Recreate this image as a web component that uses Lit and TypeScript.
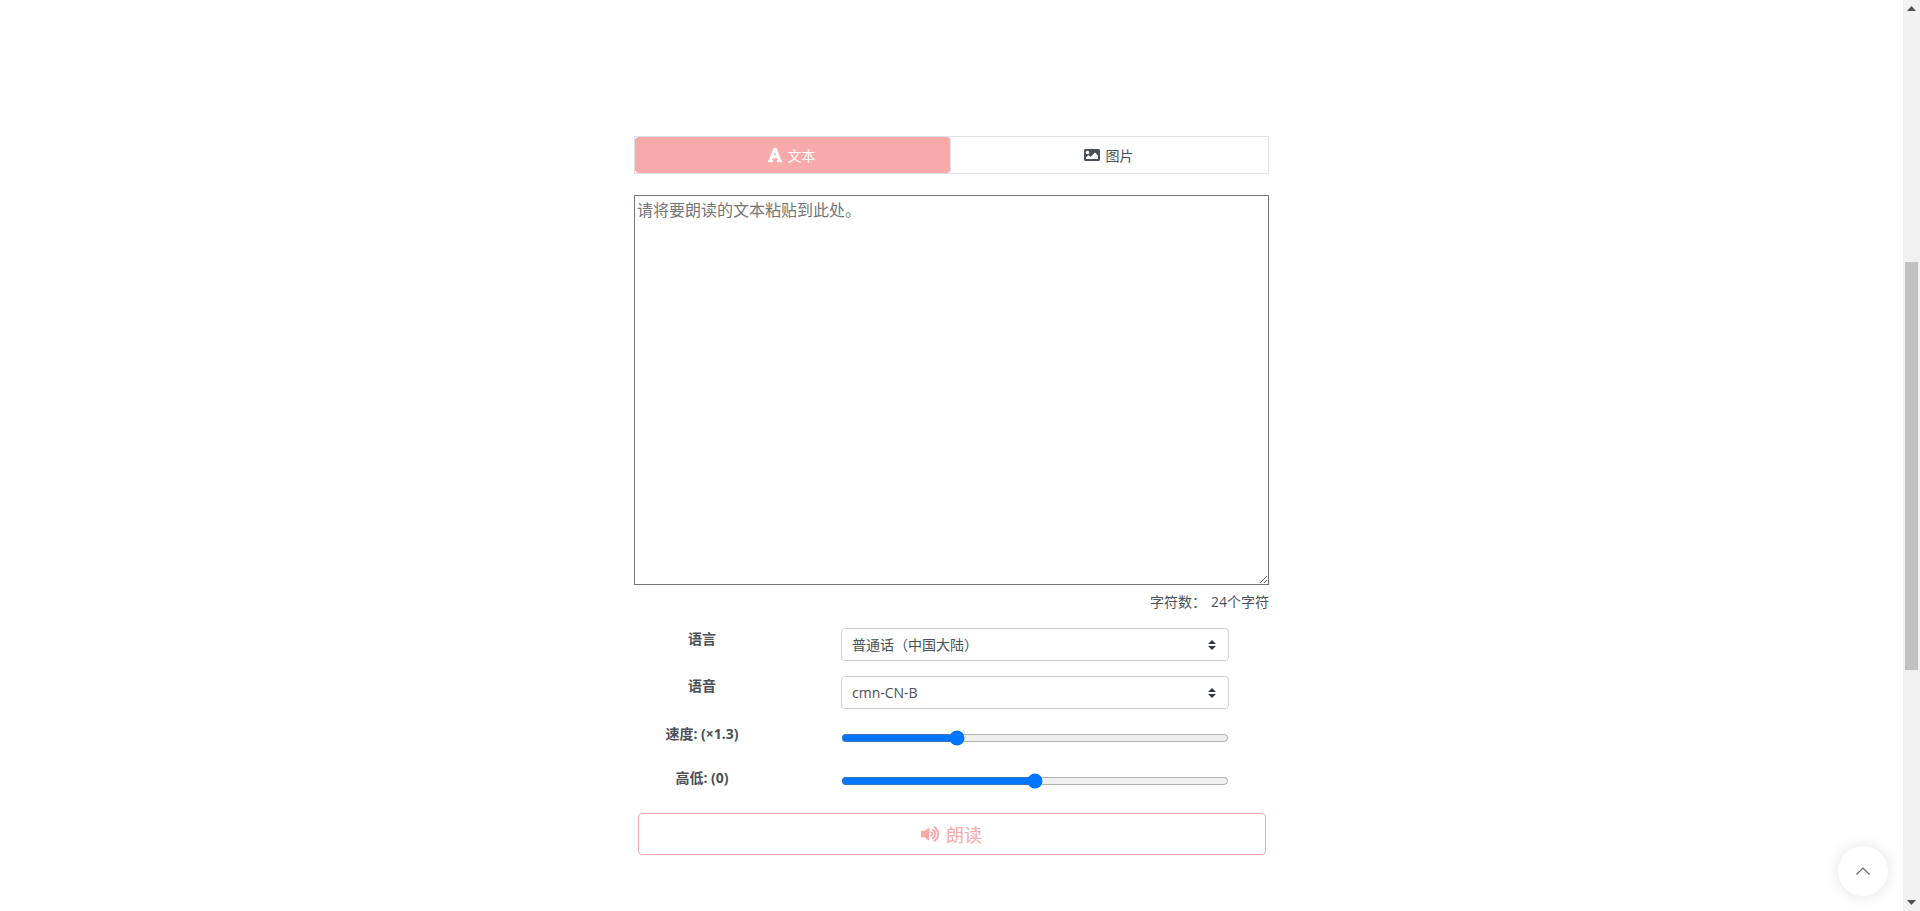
import { LitElement, html, css } from "lit";
import { customElement } from "lit/decorators.js";

@customElement("app-root")
export class AppRoot extends LitElement {
  static styles = css`
    :host {
      display: flex;
      height: 911px;
      overflow: hidden;
      background: #fff;
      color: #495057;
      font-family: "Open Sans", "Noto Sans CJK SC", sans-serif;
      font-size: 14px;
      line-height: 21px;
    }
    .main { flex: 1; display: flex; justify-content: center; padding-top: 136px; }
    .col { width: 635px; display: flex; flex-direction: column; }
    .tabs { display: flex; height: 38px; border: 1px solid #dee2e6; box-sizing: border-box; }
    .tab { flex: 1; display: flex; align-items: center; justify-content: center; gap: 6px; color: #495057; padding-right: 2px; }
    .tab.on { flex: none; box-sizing: border-box; width: 316px; background: #f8a9a9; color: #fff; border-radius: 4px; border-right: 1px solid #dee2e6; }
    .tab svg { height: 16px; fill: currentColor; display: block; }
    .tab.on svg { stroke: currentColor; stroke-width: 14; }
    textarea {
      display: block;
      box-sizing: border-box;
      width: 635px;
      height: 390px;
      margin: 21px 0 0;
      padding: 4px 2px 2px;
      font: 16px/21px "Open Sans", "Noto Sans CJK SC", sans-serif;
      border: 1px solid #767676;
      border-radius: 0;
      outline: none;
      background: #fff;
    }
    .count { display: flex; justify-content: flex-end; gap: 5px; height: 21px; margin-top: 6px; font-size: 14px; }
    .rows { display: flex; flex-direction: column; margin-top: 16px; }
    .row { display: grid; grid-template-columns: 136px 388px; column-gap: 71px; align-items: start; }
    .lab { font-weight: 700; text-align: center; }
    .row.voice .lab { margin-top: -1px; }
    select {
      appearance: none;
      -webkit-appearance: none;
      box-sizing: border-box;
      width: 388px;
      height: 33px;
      padding: 0 28px 0 10px;
      border: 1px solid #ced4da;
      border-radius: 4px;
      color: #495057;
      font: 14px "Open Sans", "Noto Sans CJK SC", sans-serif;
      background: #fff url("data:image/svg+xml,%3csvg xmlns='http://www.w3.org/2000/svg' width='4' height='5' viewBox='0 0 4 5'%3e%3cpath fill='%23343a40' d='M2 0L0 2h4zm0 5L0 3h4z'/%3e%3c/svg%3e") right 12px center/8px 10px no-repeat;
      outline: none;
    }
    .row.sel { height: 48px; }
    .row.rng { height: 43px; }
    .row.speed .lab { margin-top: -1px; }
    input[type="range"] { display: block; width: 388px; margin: 6px 0 0; }
    .read {
      box-sizing: border-box;
      align-self: center;
      width: 628px;
      height: 42px;
      margin-top: 3px;
      display: flex;
      align-items: center;
      justify-content: center;
      gap: 7px;
      border: 1px solid #f8a9a9;
      border-radius: 4px;
      background: #fff;
      color: #f8a9a9;
      font: 18px "Open Sans", "Noto Sans CJK SC", sans-serif;
      padding: 0;
    }
    .read svg { height: 16px; fill: currentColor; stroke: currentColor; stroke-width: 18; display: block; }
    .bar { width: 17px; background: #f1f1f1; display: flex; flex-direction: column; align-items: center; }
    .arrow { width: 17px; height: 17px; display: flex; align-items: center; justify-content: center; flex: none; }
    .arrow svg { display: block; width: 9px; height: 5px; fill: #505050; }
    .track { flex: 1; width: 17px; padding-top: 245px; box-sizing: border-box; display: flex; flex-direction: column; align-items: center; }
    .thumb { width: 13px; height: 408px; background: #c1c1c1; }
    .top {
      position: fixed;
      left: 1838px;
      top: 846px;
      width: 50px;
      height: 50px;
      border-radius: 50%;
      background: #fff;
      box-shadow: 0 0 15px rgba(0, 0, 0, 0.12);
      display: flex;
      align-items: center;
      justify-content: center;
    }
    .top svg { width: 14px; height: 8px; fill: none; stroke: #666; stroke-width: 1.2; display: block; }
  `;

  render() {
    return html`
      <div class="main">
        <div class="col">
          <div class="tabs">
            <div class="tab on">
              <svg viewBox="0 0 448 512"><path d="M432 416h-23.41L277.88 53.69A32 32 0 0 0 247.58 32h-47.16a32 32 0 0 0-30.3 21.69L39.41 416H16a16 16 0 0 0-16 16v32a16 16 0 0 0 16 16h128a16 16 0 0 0 16-16v-32a16 16 0 0 0-16-16h-19.58l23.3-64h152.56l23.3 64H304a16 16 0 0 0-16 16v32a16 16 0 0 0 16 16h128a16 16 0 0 0 16-16v-32a16 16 0 0 0-16-16zM176.85 272L224 142.51 271.15 272z"/></svg>
              <span>文本</span>
            </div>
            <div class="tab">
              <svg viewBox="0 0 512 512"><path d="M464 448H48c-26.51 0-48-21.49-48-48V112c0-26.51 21.49-48 48-48h416c26.51 0 48 21.49 48 48v288c0 26.51-21.49 48-48 48zM112 120c-30.928 0-56 25.072-56 56s25.072 56 56 56 56-25.072 56-56-25.072-56-56-56zM64 384h384V272l-87.515-87.515c-4.686-4.686-12.284-4.686-16.971 0L208 320l-55.515-55.515c-4.686-4.686-12.284-4.686-16.971 0L64 336v48z"/></svg>
              <span>图片</span>
            </div>
          </div>
          <textarea placeholder="请将要朗读的文本粘贴到此处。"></textarea>
          <div class="count"><span>字符数：</span><span>24个字符</span></div>
          <div class="rows">
            <div class="row sel">
              <div class="lab">语言</div>
              <select><option>普通话（中国大陆）</option></select>
            </div>
            <div class="row sel voice">
              <div class="lab">语音</div>
              <select><option>cmn-CN-B</option></select>
            </div>
            <div class="row rng speed">
              <div class="lab">速度: (×1.3)</div>
              <input type="range" min="0.2" max="4" step="0.1" .value=${"1.3"} />
            </div>
            <div class="row rng">
              <div class="lab">高低: (0)</div>
              <input type="range" min="-20" max="20" step="1" .value=${"0"} />
            </div>
          </div>
          <button class="read">
            <svg viewBox="0 0 576 512"><path d="M215.03 71.05L126.06 160H24c-13.26 0-24 10.74-24 24v144c0 13.25 10.74 24 24 24h102.06l88.97 88.95c15.03 15.03 40.97 4.47 40.97-16.97V88.02c0-21.46-25.96-31.98-40.97-16.97zm233.32-51.08c-11.17-7.33-26.18-4.24-33.51 6.95-7.34 11.17-4.22 26.18 6.95 33.51 66.27 43.49 105.82 116.6 105.82 195.58 0 78.98-39.55 152.09-105.82 195.58-11.17 7.32-14.29 22.34-6.95 33.5 7.04 10.71 21.93 14.56 33.51 6.95C528.27 439.58 576 351.33 576 256S528.27 72.43 448.35 19.97zM480 256c0-63.53-32.06-121.94-85.77-156.24-11.19-7.14-26.03-3.82-33.12 7.46s-3.78 26.21 7.41 33.36C408.27 165.97 432 209.11 432 256s-23.73 90.03-63.48 115.42c-11.19 7.14-14.5 22.07-7.41 33.36 6.51 10.36 21.12 15.14 33.12 7.46C447.94 377.94 480 319.53 480 256zm-141.77-76.87c-11.58-6.33-26.19-2.16-32.61 9.45-6.39 11.61-2.16 26.2 9.45 32.61C327.98 228.28 336 241.63 336 256c0 14.38-8.02 27.72-20.92 34.81-11.61 6.41-15.84 21-9.45 32.61 6.43 11.66 21.05 15.8 32.61 9.45 28.23-15.55 45.77-45 45.77-76.88s-17.54-61.32-45.78-76.86z"/></svg>
            <span>朗读</span>
          </button>
        </div>
      </div>
      <div class="bar">
        <div class="arrow"><svg viewBox="0 0 9 5"><path d="M4.5 0L9 5H0z"/></svg></div>
        <div class="track"><div class="thumb"></div></div>
        <div class="arrow"><svg viewBox="0 0 9 5"><path d="M0 0h9L4.5 5z"/></svg></div>
      </div>
      <div class="top"><svg viewBox="0 0 14 8"><path d="M0.5 7.5L7 1l6.5 6.5"/></svg></div>
    `;
  }
}
